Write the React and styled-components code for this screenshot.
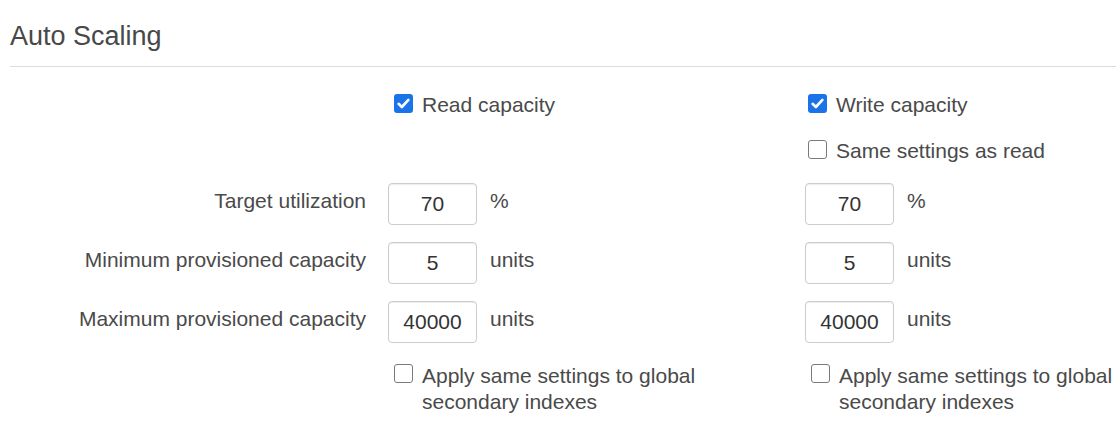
import React from "react";
import styled, { createGlobalStyle } from "styled-components";

const Global = createGlobalStyle`
  html, body { margin: 0; padding: 0; background: #fff; }
  body {
    font-family: "Liberation Sans", Arial, Helvetica, sans-serif;
    color: #4a4a4a;
    -webkit-font-smoothing: antialiased;
  }
  * { box-sizing: border-box; }
`;

const Page = styled.div`
  padding-left: 10px;
  width: 1116px;
`;

const Title = styled.h2`
  margin: 0;
  padding-top: 21px;
  font-size: 27px;
  font-weight: 400;
  line-height: 31px;
  color: #484848;
`;

const Divider = styled.div`
  margin-top: 14px;
  height: 1px;
  background: #dcdcdc;
`;

const Form = styled.div`
  display: grid;
  grid-template-columns: 378px 417px 1fr;
  row-gap: 17px;
  padding-top: 23px;
  font-size: 21px;
`;

const Cell = styled.div`
  display: flex;
  flex-direction: ${(p) => (p.$stack ? "column" : "row")};
  align-items: flex-start;
  gap: ${(p) => (p.$stack ? "16px" : "0")};
  padding-top: ${(p) => p.$pt || 0}px;
`;

const Label = styled.div`
  padding-top: 3px;
  padding-right: 22px;
  text-align: right;
  line-height: 30px;
  color: #4a4a4a;
`;

const Input = styled.input`
  width: 89px;
  height: 42px;
  border: 1px solid #cccccc;
  border-radius: 4px;
  box-shadow: inset 0 1px 1px rgba(0, 0, 0, 0.075);
  padding: 0 6px;
  font-family: inherit;
  font-size: 21px;
  color: #333;
  text-align: center;
  outline: none;
  background: #fff;
`;

const Unit = styled.span`
  padding-top: 3px;
  margin-left: 13px;
  line-height: 30px;
  color: #4a4a4a;
`;

const Check = styled.label`
  display: flex;
  align-items: flex-start;
  line-height: ${(p) => p.$lh || 30}px;
  color: #4a4a4a;
  cursor: pointer;
`;

const Box = styled.span`
  flex: none;
  width: 19px;
  height: 19px;
  margin-top: ${(p) => p.$top}px;
  margin-left: ${(p) => p.$left}px;
  margin-right: 9px;
  border-radius: 3px;
  border: ${(p) => (p.$on ? "none" : "1.5px solid #7a7a7a")};
  background: ${(p) => (p.$on ? "#1a73e8" : "#fff")};
  display: flex;
  align-items: center;
  justify-content: center;
`;

const CheckText = styled.span`
  max-width: ${(p) => (p.$max ? `${p.$max}px` : "none")};
`;

function CheckItem({ on, left = 6, top = 4, lh, max, children }) {
  return (
    <Check $lh={lh}>
      <Box $on={on} $left={left} $top={top}>
        {on && (
          <svg width="19" height="19" viewBox="0 0 19 19">
            <path
              d="M4.6 9.8 L7.9 13 L14.4 5.9"
              fill="none"
              stroke="#fff"
              strokeWidth="2.6"
              strokeLinecap="round"
              strokeLinejoin="round"
            />
          </svg>
        )}
      </Box>
      <CheckText $max={max}>{children}</CheckText>
    </Check>
  );
}

const rows = [
  { label: "Target utilization", value: "70", unit: "%" },
  { label: "Minimum provisioned capacity", value: "5", unit: "units" },
  { label: "Maximum provisioned capacity", value: "40000", unit: "units" },
];

export default function App() {
  return (
    <>
      <Global />
      <Page>
        <Title>Auto Scaling</Title>
        <Divider />
        <Form>
          <div />
          <Cell>
            <CheckItem on left={6}>Read capacity</CheckItem>
          </Cell>
          <Cell $stack>
            <CheckItem on left={3}>Write capacity</CheckItem>
            <CheckItem left={3}>Same settings as read</CheckItem>
          </Cell>

          {rows.map((r) => (
            <React.Fragment key={r.label}>
              <Label>{r.label}</Label>
              <Cell>
                <Input defaultValue={r.value} />
                <Unit>{r.unit}</Unit>
              </Cell>
              <Cell>
                <Input defaultValue={r.value} />
                <Unit>{r.unit}</Unit>
              </Cell>
            </React.Fragment>
          ))}

          <div />
          <Cell $pt={3}>
            <CheckItem left={6} top={1} lh={26} max={300}>
              Apply same settings to global secondary indexes
            </CheckItem>
          </Cell>
          <Cell $pt={3}>
            <CheckItem left={6} top={1} lh={26}>
              Apply same settings to global secondary indexes
            </CheckItem>
          </Cell>
        </Form>
      </Page>
    </>
  );
}
